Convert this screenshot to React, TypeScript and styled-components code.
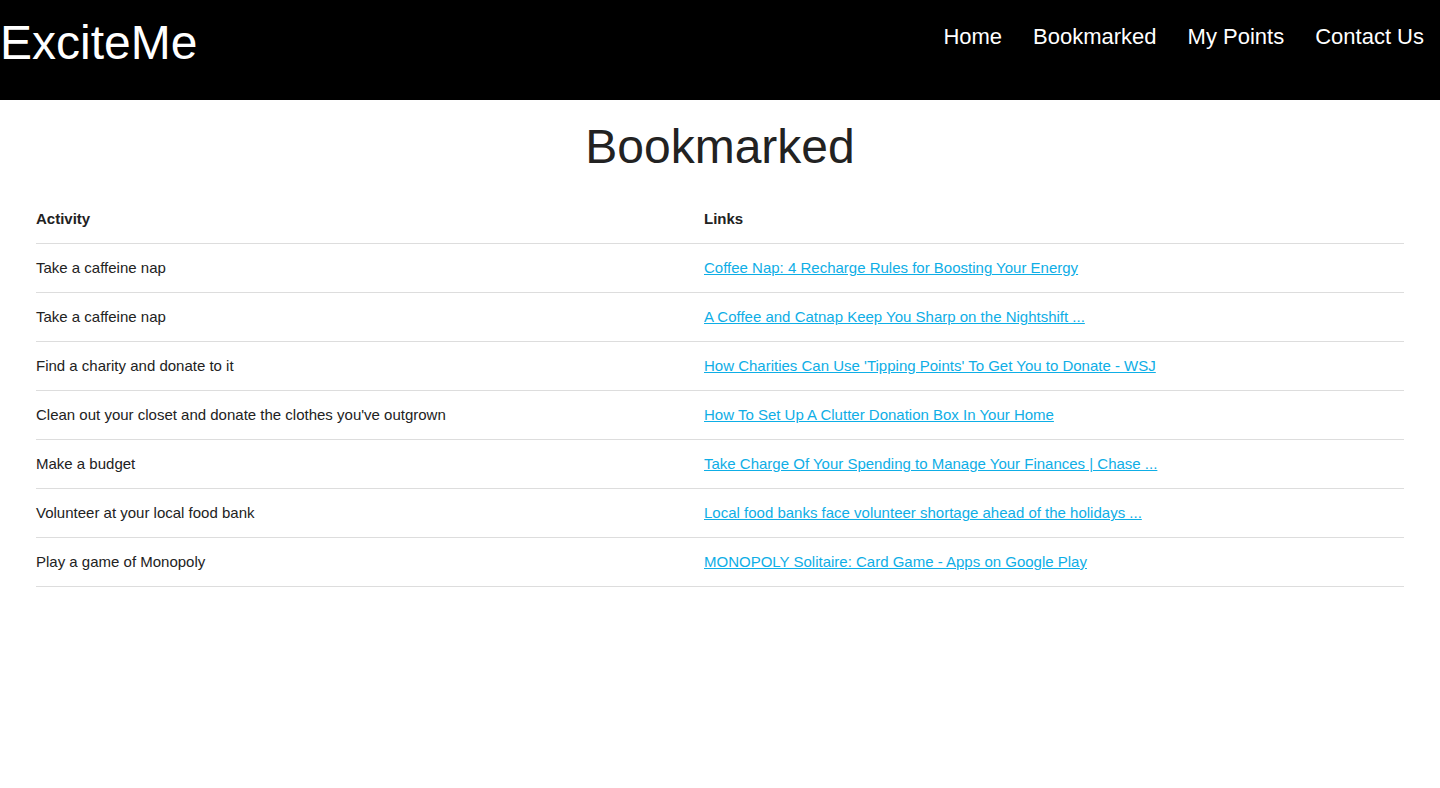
import React from "react";
import styled, { createGlobalStyle } from "styled-components";

const GlobalStyle = createGlobalStyle`
  html, body { margin: 0; padding: 0; background: #fff; }
  body { font-family: "Liberation Sans", Arial, Helvetica, sans-serif; color: #222; }
  * { box-sizing: border-box; }
`;

const Header = styled.header`
  height: 100px;
  background: #000;
  display: flex;
  justify-content: space-between;
  align-items: flex-start;
  padding: 0 16px 0 0;
`;

const Logo = styled.div`
  color: #fff;
  font-size: 48px;
  line-height: 48px;
  margin-top: 19px;
`;

const Nav = styled.nav`
  display: flex;
  gap: 31px;
  margin-top: 24px;
`;

const NavLink = styled.a`
  color: #fff;
  font-size: 22px;
  line-height: 26px;
  text-decoration: none;
`;

const Main = styled.main`
  padding: 0 36px;
`;

const Title = styled.h1`
  margin: 20px 0 0;
  font-size: 48px;
  line-height: 53px;
  font-weight: 400;
  text-align: center;
  color: #222;
`;

const Table = styled.table`
  margin-top: 21px;
  width: 100%;
  border-collapse: collapse;
  font-size: 15px;
`;

const HeadCell = styled.th<{ $w?: string }>`
  text-align: left;
  font-weight: 700;
  height: 49px;
  padding: 0;
  border-bottom: 1px solid #ddd;
  width: ${(p) => p.$w || "auto"};
  color: #222;
`;

const Cell = styled.td`
  height: 49px;
  padding: 0;
  border-bottom: 1px solid #ddd;
  color: #222;
`;

const LinkText = styled.a`
  color: #0eaee6;
  text-decoration: underline;
`;

const rows: [string, string][] = [
  ["Take a caffeine nap", "Coffee Nap: 4 Recharge Rules for Boosting Your Energy"],
  ["Take a caffeine nap", "A Coffee and Catnap Keep You Sharp on the Nightshift ..."],
  ["Find a charity and donate to it", "How Charities Can Use 'Tipping Points' To Get You to Donate - WSJ"],
  ["Clean out your closet and donate the clothes you've outgrown", "How To Set Up A Clutter Donation Box In Your Home"],
  ["Make a budget", "Take Charge Of Your Spending to Manage Your Finances | Chase ..."],
  ["Volunteer at your local food bank", "Local food banks face volunteer shortage ahead of the holidays ..."],
  ["Play a game of Monopoly", "MONOPOLY Solitaire: Card Game - Apps on Google Play"],
];

export default function App() {
  return (
    <>
      <GlobalStyle />
      <Header>
        <Logo>ExciteMe</Logo>
        <Nav>
          <NavLink href="#">Home</NavLink>
          <NavLink href="#">Bookmarked</NavLink>
          <NavLink href="#">My Points</NavLink>
          <NavLink href="#">Contact Us</NavLink>
        </Nav>
      </Header>
      <Main>
        <Title>Bookmarked</Title>
        <Table>
          <thead>
            <tr>
              <HeadCell $w="668px">Activity</HeadCell>
              <HeadCell>Links</HeadCell>
            </tr>
          </thead>
          <tbody>
            {rows.map(([a, l], i) => (
              <tr key={i}>
                <Cell>{a}</Cell>
                <Cell>
                  <LinkText href="#">{l}</LinkText>
                </Cell>
              </tr>
            ))}
          </tbody>
        </Table>
      </Main>
    </>
  );
}
